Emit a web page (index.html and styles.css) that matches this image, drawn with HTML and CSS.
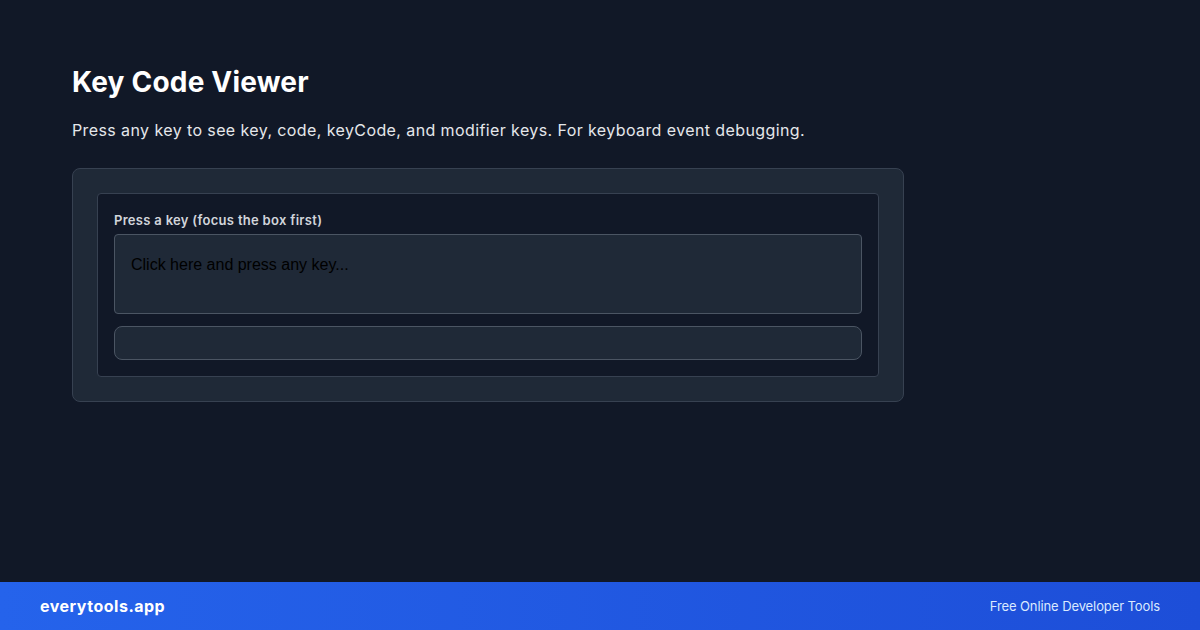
FILE: index.html
```html
<!DOCTYPE html>
<html lang="en">
<head>
<meta charset="utf-8">
<title>Key Code Viewer</title>
<link rel="stylesheet" href="styles.css">
</head>
<body>
<div class="page">
  <main class="main">
    <h1 class="title">Key Code Viewer</h1>
    <p class="subtitle">Press any key to see key, code, keyCode, and modifier keys. For keyboard event debugging.</p>
    <section class="card">
      <div class="panel">
        <label class="label">Press a key (focus the box first)</label>
        <div class="keybox" tabindex="0">Click here and press any key...</div>
        <div class="result"></div>
      </div>
    </section>
  </main>
  <footer class="footer">
    <span class="brand">everytools.app</span>
    <span class="tagline">Free Online Developer Tools</span>
  </footer>
</div>
</body>
</html>
```
FILE: styles.css
```css
* { box-sizing: border-box; }
html, body { margin: 0; padding: 0; }
body {
  background: #111827;
  font-family: Inter, "Noto Sans", "Liberation Sans", sans-serif;
  color: #f9fafb;
}
.page {
  width: 1200px;
  height: 630px;
  display: flex;
  flex-direction: column;
}
.main {
  flex: 1;
  padding: 64px 72px 0 72px;
}
.title {
  margin: 0;
  font-size: 28px;
  line-height: 36px;
  font-weight: 700;
  color: #ffffff;
  letter-spacing: 0.2px;
}
.subtitle {
  margin: 18px 0 26px 0;
  font-size: 16px;
  line-height: 24px;
  color: #e5e7eb;
  letter-spacing: 0.4px;
}
.card {
  width: 832px;
  background: #1f2937;
  border: 1px solid #374151;
  border-radius: 8px;
  padding: 24px;
}
.panel {
  background: #111827;
  border: 1px solid #374151;
  border-radius: 4px;
  padding: 16px;
  display: flex;
  flex-direction: column;
}
.label {
  font-size: 13px;
  line-height: 20px;
  font-weight: 600;
  color: #d1d5db;
  margin-bottom: 4px;
  letter-spacing: 0.3px;
}
.keybox {
  height: 80px;
  background: #1f2937;
  border: 1px solid #4b5563;
  border-radius: 4px;
  padding: 18px 16px 16px 16px;
  font-family: "Liberation Sans", Arial, sans-serif;
  font-size: 16px;
  line-height: 24px;
  color: #000000;
  outline: none;
}
.result {
  margin-top: 12px;
  height: 34px;
  background: #1f2937;
  border: 1px solid #4b5563;
  border-radius: 8px;
}
.footer {
  height: 48px;
  flex: none;
  display: flex;
  align-items: center;
  justify-content: space-between;
  padding: 0 40px;
  background: linear-gradient(90deg, #2563eb 0%, #1d4ed8 100%);
}
.brand {
  font-size: 16px;
  font-weight: 700;
  color: #ffffff;
  letter-spacing: 0.5px;
}
.tagline {
  font-size: 13px;
  color: #dbeafe;
  letter-spacing: -0.1px;
}
```
